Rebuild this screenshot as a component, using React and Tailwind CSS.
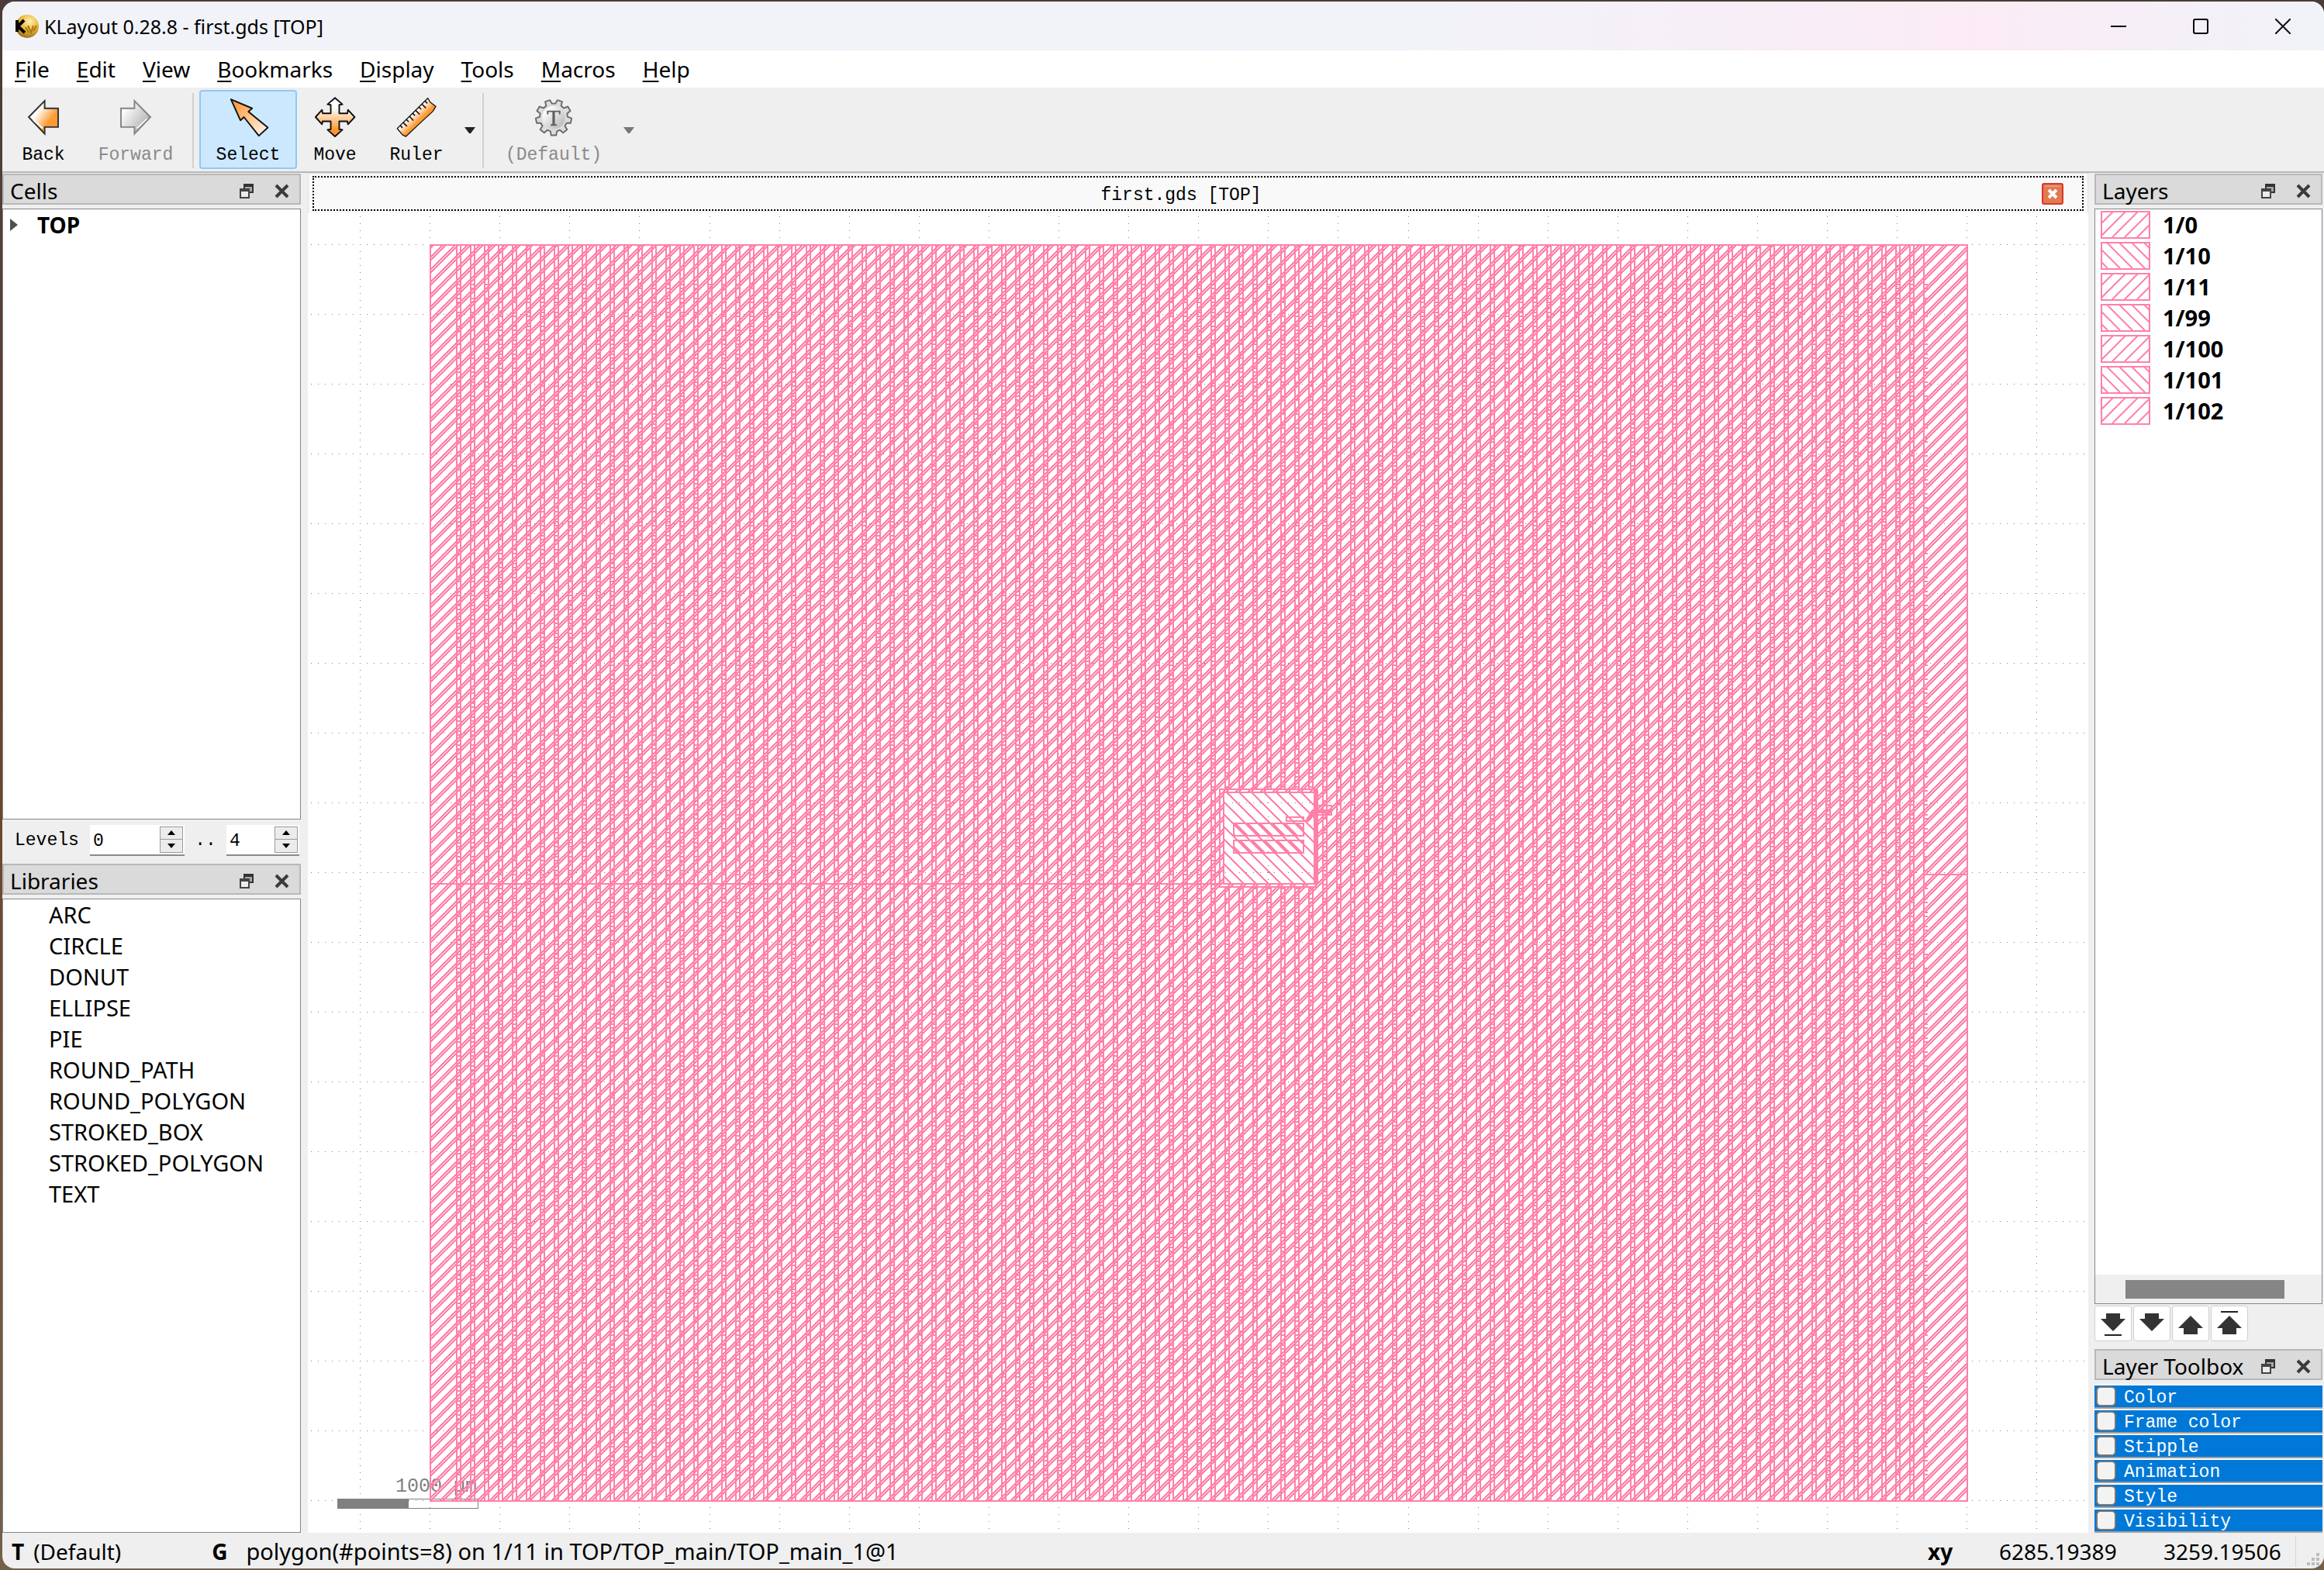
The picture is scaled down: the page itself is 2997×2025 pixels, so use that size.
import React from "react";

const PINK = "#ff80a8";

const menus = ["File", "Edit", "View", "Bookmarks", "Display", "Tools", "Macros", "Help"];
const libraries = [
  "ARC", "CIRCLE", "DONUT", "ELLIPSE", "PIE", "ROUND_PATH",
  "ROUND_POLYGON", "STROKED_BOX", "STROKED_POLYGON", "TEXT",
];
const layers = ["1/0", "1/10", "1/11", "1/99", "1/100", "1/101", "1/102"];
const toolboxRows = ["Color", "Frame color", "Stipple", "Animation", "Style", "Visibility"];

const range = (n) => Array.from({ length: n }, (_, i) => i);

/* ---------- icons ---------- */

function AppIcon() {
  return (
    <svg className="h-8 w-8" viewBox="0 0 32 32" aria-hidden="true">
      <defs>
        <radialGradient id="ball" cx="0.6" cy="0.3" r="0.8">
          <stop offset="0" stopColor="#fff3b8" />
          <stop offset="0.45" stopColor="#eebc3c" />
          <stop offset="1" stopColor="#8a5a0c" />
        </radialGradient>
      </defs>
      <circle cx="17" cy="16" r="15" fill="url(#ball)" />
      <path d="M4 8v15M13 8L5 16l9 8" stroke="#000" strokeWidth="4" fill="none" />
      <path d="M15 17l4 7M18 15l4 9 3-9M25 22l4-7" stroke="#a87416" strokeWidth="2" fill="none" />
    </svg>
  );
}

function BackIcon() {
  return (
    <svg className="h-14 w-14" viewBox="83 23 168 168" aria-hidden="true">
      <defs>
        <linearGradient id="back" x1="0.1" y1="0.2" x2="0.8" y2="0.8">
          <stop offset="0.25" stopColor="#fff" />
          <stop offset="0.8" stopColor="#ff9a33" />
        </linearGradient>
      </defs>
      <path d="M108 107L172 42V72H226V147H172V174Z" fill="url(#back)" stroke="#303030" strokeWidth="6" />
      <path d="M126 118L164 152" stroke="#fff" strokeWidth="6" />
    </svg>
  );
}

function ForwardIcon() {
  return (
    <svg className="h-14 w-14" viewBox="445 23 168 168" aria-hidden="true">
      <defs>
        <linearGradient id="fwd" x1="0" y1="0.2" x2="0.8" y2="0.8">
          <stop offset="0.1" stopColor="#fff" />
          <stop offset="0.9" stopColor="#bdbdbd" />
        </linearGradient>
      </defs>
      <path d="M588 107L524 42V72H470V147H524V174Z" fill="url(#fwd)" stroke="#848484" strokeWidth="6" />
      <path d="M574 114L534 152" stroke="#fff" strokeWidth="5" />
    </svg>
  );
}

function SelectIcon() {
  return (
    <svg className="h-14 w-14" viewBox="877 27 168 168" aria-hidden="true">
      <defs>
        <linearGradient id="sel" x1="0" y1="0" x2="1" y2="1">
          <stop offset="0.15" stopColor="#ff9f45" />
          <stop offset="0.95" stopColor="#fff6ec" />
        </linearGradient>
      </defs>
      <path
        d="M892 40L977 76L962 89L1040 153L1004 186L944 111L930 124Z"
        fill="url(#sel)" stroke="#111" strokeWidth="6" strokeLinejoin="round"
      />
    </svg>
  );
}

function MoveIcon() {
  return (
    <svg className="h-14 w-14" viewBox="12 23 168 168" aria-hidden="true">
      <defs>
        <linearGradient id="mov" x1="0" y1="0" x2="0" y2="1">
          <stop offset="0.25" stopColor="#fff" />
          <stop offset="0.85" stopColor="#ff942b" />
        </linearGradient>
      </defs>
      <path
        d="M96 30L126 56L113 58V92H146L148 78L175 107L148 136L146 124H113V156L126 158L96 185L66 158L79 156V124H46L44 136L18 107L44 78L46 92H79V58L66 56Z"
        fill="url(#mov)" stroke="#111" strokeWidth="6" strokeLinejoin="round"
      />
    </svg>
  );
}

function RulerIcon() {
  return (
    <svg className="h-14 w-14" viewBox="330 23 168 168" aria-hidden="true">
      <defs>
        <linearGradient id="rul" x1="0.35" y1="0.35" x2="0.65" y2="0.65">
          <stop offset="0.2" stopColor="#fff" />
          <stop offset="0.75" stopColor="#ff9a33" />
        </linearGradient>
      </defs>
      <path
        d="M337 153L460 31L468 46L492 64L480 84L430 130L372 185L358 178Z"
        fill="url(#rul)" stroke="#111" strokeWidth="4" strokeLinejoin="round"
      />
      <path
        d="M349 141L358 150M361 129L376 144M374 117L383 126M386 104L402 121M399 92L408 101M411 80L427 96M424 67L433 76M436 55L452 71M449 43L458 52"
        stroke="#111" strokeWidth="5"
      />
    </svg>
  );
}

const gearPath = (() => {
  const pts = [];
  const teeth = 9;
  range(teeth).forEach((i) => {
    const base = 90 + (i * 360) / teeth;
    [[-13, 56], [-8, 72], [8, 72], [13, 56]].forEach(([d, r]) => {
      const a = ((base + d) * Math.PI) / 180;
      pts.push(`${Math.round(948 + r * Math.cos(a))} ${Math.round(109 + r * Math.sin(a))}`);
    });
  });
  return `M${pts.join("L")}Z`;
})();

function DefaultIcon() {
  return (
    <svg className="h-14 w-14" viewBox="864 23 168 168" aria-hidden="true">
      <defs>
        <linearGradient id="gear" x1="0" y1="0" x2="1" y2="1">
          <stop offset="0.2" stopColor="#fafafa" />
          <stop offset="0.9" stopColor="#b9b9b9" />
        </linearGradient>
      </defs>
      <path d={gearPath} fill="#dcdcdc" stroke="#6a6a6a" strokeWidth="6" strokeLinejoin="round" />
      <circle cx="948" cy="109" r="46" fill="url(#gear)" />
      <path d="M924 96V84H972V96M936 139H960" fill="none" stroke="#606060" strokeWidth="6" />
      <path d="M948 84V138" stroke="#606060" strokeWidth="10" />
    </svg>
  );
}

function FloatIcon() {
  return (
    <svg className="h-5 w-5" viewBox="0 0 20 20" aria-hidden="true">
      <path d="M6 1H19V13H13V7H6Z" fill="#333" />
      <path d="M8 5H17V11H14V7H8Z" fill="#a8a8a8" />
      <path d="M1 7H14V20H1Z" fill="#444" />
      <path d="M3 11H12V18H3Z" fill="#ececec" />
    </svg>
  );
}

function CrossIcon() {
  return (
    <svg className="h-5 w-5" viewBox="0 0 20 20" aria-hidden="true">
      <path d="M2 3L17 18M17 3L2 18" stroke="#3a3a3a" strokeWidth="4" />
    </svg>
  );
}

function TabCloseIcon() {
  return (
    <svg className="h-7 w-7" viewBox="0 0 28 28" aria-hidden="true">
      <rect x="1" y="1" width="26" height="26" rx="2" fill="#e27a50" stroke="#d8392a" strokeWidth="2" />
      <path d="M4 4H24" stroke="#e8977c" strokeWidth="2" />
      <path d="M9 9L19 19M19 9L9 19" stroke="#fff" strokeWidth="4" />
    </svg>
  );
}

function Swatch({ back }) {
  const lines = back
    ? "M1 9L25 33M1 -7L41 33M17 -7L57 33M33 -7L64 24M49 -7L64 8M1 25L9 33"
    : "M-1 17L17 -1M-1 33L33 -1M15 33L49 -1M31 33L65 -1M47 33L65 15";
  return (
    <svg className="h-9 w-16" viewBox="0 0 64 36" aria-hidden="true">
      <g transform="translate(0,1)">
        <path d={lines} stroke={PINK} strokeWidth="2" />
      </g>
      <rect x="1" y="1" width="62" height="34" fill="none" stroke={PINK} strokeWidth="2" />
    </svg>
  );
}

const arrows = [
  { label: "Move to bottom", d: "M14 9H32V16H39L23 32L7 16H14Z", bar: 37 },
  { label: "Move down", d: "M14 9H32V16H39L23 32L7 16H14Z" },
  { label: "Move up", d: "M14 36H32V28H39L23 12L7 28H14Z" },
  { label: "Move to top", d: "M14 36H32V28H39L23 12L7 28H14Z", bar: 7 },
];

/* ---------- shared pieces ---------- */

function DockHeader({ title }) {
  return (
    <div className="flex h-10 shrink-0 items-center border-2 border-[#b8b8b8] bg-[#dadada] pl-2 pr-3 pt-[3px]">
      <h2 className="flex-1 whitespace-nowrap text-[28px]">{title}</h2>
      <div className="flex gap-6">
        <button aria-label={`Float ${title}`} className="flex h-6 w-6 items-center justify-center"><FloatIcon /></button>
        <button aria-label={`Close ${title}`} className="flex h-6 w-5 items-center justify-center"><CrossIcon /></button>
      </div>
    </div>
  );
}

function ToolButton({ icon, label, width, active, disabled }) {
  return (
    <button
      disabled={disabled}
      className={`${width} flex h-[102px] flex-col items-center rounded-sm border-2 pt-[6px] ${
        active ? "border-[#90c8f6] bg-[#cce8ff]" : "border-transparent"
      } ${disabled ? "text-[#8a8a8a]" : "text-black"}`}
    >
      {icon}
      <span className="mt-[6px] whitespace-nowrap font-['Liberation_Mono',monospace] text-[23px] leading-8">{label}</span>
    </button>
  );
}

function DropArrow({ color, label, width }) {
  return (
    <button aria-label={label} className={`${width} flex h-[102px] items-center justify-center pt-[2px]`}>
      <svg className="h-2 w-[14px]" viewBox="0 0 14 8" aria-hidden="true">
        <path d="M0 0H14L8 8H6Z" fill={color} />
      </svg>
    </button>
  );
}

function Spin({ value, label, width }) {
  return (
    <div className={`${width} flex h-10 border-b-2 border-[#8a8a8a] bg-white`}>
      <input
        aria-label={label}
        defaultValue={value}
        className="w-0 flex-1 bg-transparent pl-1 pt-1 font-['Liberation_Mono',monospace] text-[23px] outline-none"
      />
      <div className="mr-[2px] mt-[2px] flex h-[34px] w-[30px] flex-col border border-[#9a9a9a] bg-[#ececec]">
        <button aria-label={`${label} up`} className="flex flex-1 items-center justify-center border-b border-[#9a9a9a]">
          <svg className="h-[6px] w-[10px]" viewBox="0 0 10 6"><path d="M5 0L10 6H0Z" /></svg>
        </button>
        <button aria-label={`${label} down`} className="flex flex-1 items-center justify-center">
          <svg className="h-[6px] w-[10px]" viewBox="0 0 10 6"><path d="M5 6L10 0H0Z" /></svg>
        </button>
      </div>
    </div>
  );
}

/* ---------- layout drawing ---------- */

// One 16x16 stipple tile: a cell is set when (x + dir * y) mod 16 is in the list.
const stipple = (dir, list) => {
  let d = "";
  range(16).forEach((y) =>
    range(16).forEach((x) => {
      if (list.includes((x + dir * y + 16) % 16)) d += `M${x} ${y}h1v1h-1z`;
    })
  );
  return d;
};

const hatch = stipple(1, [5, 6, 7, 9, 10, 11]);
const backHatch = stipple(-1, [15, 0, 1]);
const denseHatch = stipple(-1, [15, 0, 1, 2, 3, 4]);

const gridDots = (() => {
  let d = "";
  range(26).forEach((i) => {
    const x = Math.round(464 + i * 90.1);
    range(189).forEach((k) => { d += `M${x} ${279 + 9 * k}h1v1h-1z`; });
  });
  range(19).forEach((i) => {
    const y = 315 + i * 90;
    range(255).forEach((k) => { d += `M${401 + 9 * k} ${y}h1v1h-1z`; });
  });
  return d;
})();

const columns = (() => {
  let d = "";
  range(106).forEach((i) => {
    const x = Math.round(588 + i * 18.02);
    d += `M${x} 315h2v1622h-2z`;
    if (i < 105) d += `M${x + 5} 315h2v1622h-2z`;
    range(86).forEach((k) => {
      const y = 366 + 18 * k;
      d += `M${x + 1} ${y}h5v2h-5zM${x + 1} ${y + 5}h5v2h-5z`;
    });
  });
  return d;
})();

function LayoutDrawing() {
  return (
    <svg className="block min-h-0 w-full flex-1 bg-white" shapeRendering="crispEdges" role="img" aria-label="Layout view">
      <defs>
        <pattern id="hatch" width="16" height="16" patternUnits="userSpaceOnUse">
          <path d={hatch} fill={PINK} />
        </pattern>
        <pattern id="backHatch" width="16" height="16" patternUnits="userSpaceOnUse">
          <path d={backHatch} fill={PINK} />
        </pattern>
        <pattern id="denseHatch" width="16" height="16" patternUnits="userSpaceOnUse">
          <path d={denseHatch} fill={PINK} />
        </pattern>
        <clipPath id="outside">
          <path clipRule="evenodd" d="M554 315H2538V1937H554ZM1572 1017V1145H1700V1017Z" />
        </clipPath>
      </defs>
      <g transform="translate(-397,-275)">
        <path d={gridDots} fill="#808080" />
        <rect x="435" y="1933" width="91" height="13" fill="#808080" />
        <path d="M526 1933h90v12h-90z" fill="none" stroke="#808080" strokeWidth="1" />
        <text x="510" y="1924" fontSize="25" fill="#808080" fontFamily="'Liberation Mono', monospace">1000 µm</text>

        <path fillRule="evenodd" fill="url(#hatch)" d="M554 315H2538V1937H554ZM1577 1021V1141H1696V1021Z" />
        <path d={columns} fill={PINK} clipPath="url(#outside)" />
        <path d="M554 1139H1572V1141H554ZM2484 1127H2538V1129H2484Z" fill={PINK} />
        <rect x="555" y="316" width="1982" height="1620" fill="none" stroke={PINK} strokeWidth="2" />

        <rect x="1578" y="1022" width="117" height="118" fill="url(#backHatch)" stroke={PINK} strokeWidth="2" />
        <path d="M1573 1018H1697V1144H1573Z" fill="none" stroke={PINK} strokeWidth="2" />
        <path d="M1699 1018V1140" stroke={PINK} strokeWidth="2" />
        <rect x="1591" y="1062" width="90" height="16" fill="url(#denseHatch)" stroke={PINK} strokeWidth="2" />
        <rect x="1591" y="1084" width="90" height="16" fill="url(#denseHatch)" stroke={PINK} strokeWidth="2" />
        <rect x="1659" y="1054" width="22" height="5" fill="none" stroke={PINK} strokeWidth="2" />
        <path d="M1682 1060L1692 1044H1717V1049H1697L1688 1060Z" fill={PINK} />
        <rect x="1697" y="1039" width="20" height="12" fill="none" stroke={PINK} strokeWidth="2" />
      </g>
    </svg>
  );
}

/* ---------- page ---------- */

export default function App() {
  return (
    <div className="h-screen bg-linear-to-b from-[#4a3c38] via-[#6b452c] to-[#75604a] pb-[2px] pl-[3px] pt-[2px] font-['Noto_Sans',sans-serif] text-[29px] leading-9 text-black">
      <div className="flex h-full flex-col overflow-hidden rounded-2xl bg-[#efefef]">
        <header className="flex h-[63px] shrink-0 items-center bg-linear-to-r from-[#f1f3f9] from-60% via-[#fbebf5] via-85% to-[#f0f3f8] pl-[15px]">
          <AppIcon />
          <h1 className="ml-[7px] flex-1 text-[25px]">KLayout 0.28.8 - first.gds [TOP]</h1>
          <button aria-label="Minimize" className="flex h-full w-[106px] items-center justify-center">
            <svg className="h-5 w-5" viewBox="0 0 20 20"><path d="M0 10H20" stroke="#000" strokeWidth="2" /></svg>
          </button>
          <button aria-label="Maximize" className="flex h-full w-[106px] items-center justify-center">
            <svg className="h-5 w-5" viewBox="0 0 20 20"><rect x="1" y="1" width="18" height="18" rx="2" fill="none" stroke="#000" strokeWidth="2" /></svg>
          </button>
          <button aria-label="Close" className="flex h-full w-[106px] items-center justify-center">
            <svg className="h-5 w-5" viewBox="0 0 20 20"><path d="M0 0L20 20M20 0L0 20" stroke="#111" strokeWidth="2" /></svg>
          </button>
        </header>

        <nav className="flex h-[49px] shrink-0 items-center gap-[35px] border-b border-[#ececec] bg-white pl-4 text-[28px]">
          {menus.map((m) => (
            <button key={m} className="h-full">
              <span className="underline decoration-2 underline-offset-4">{m[0]}</span>{m.slice(1)}
            </button>
          ))}
        </nav>

        <div className="flex h-[109px] shrink-0 border-b-2 border-[#b8b8b8] pt-[2px]">
          <ToolButton icon={<BackIcon />} label="Back" width="w-[106px]" />
          <ToolButton icon={<ForwardIcon />} label="Forward" width="w-[132px]" disabled />
          <div className="mx-[7px] my-1 w-[2px] bg-[#d0d0d0]" />
          <ToolButton icon={<SelectIcon />} label="Select" width="w-[126px]" active />
          <ToolButton icon={<MoveIcon />} label="Move" width="w-[98px]" />
          <ToolButton icon={<RulerIcon />} label="Ruler" width="w-[112px]" />
          <DropArrow color="#222" label="Ruler options" width="w-[26px]" />
          <div className="mx-[3px] my-1 w-[2px] bg-[#d0d0d0]" />
          <ToolButton icon={<DefaultIcon />} label="(Default)" width="w-[174px]" disabled />
          <DropArrow color="#777" label="Default options" width="w-[20px]" />
        </div>

        <main className="flex min-h-0 flex-1">
          <aside className="mr-[9px] flex w-[385px] shrink-0 flex-col pt-[1px]">
            <DockHeader title="Cells" />
            <div className="mt-[5px] h-[788px] border border-[#85858f] bg-white">
              <div className="flex h-10 items-center pl-2">
                <svg className="h-4 w-3" viewBox="0 0 12 16" aria-hidden="true"><path d="M1 0L11 8L1 16Z" fill="#505050" /></svg>
                <span className="ml-6 text-[28px] font-bold">TOP</span>
              </div>
            </div>
            <div className="flex h-[57px] items-center pb-2 pl-4 pt-1 font-['Liberation_Mono',monospace] text-[23px]">
              <span className="w-[97px]">Levels</span>
              <Spin value="0" label="Minimum level" width="w-[122px]" />
              <span className="w-[54px] text-center">..</span>
              <Spin value="4" label="Maximum level" width="w-[94px]" />
            </div>
            <DockHeader title="Libraries" />
            <ul className="mt-[5px] min-h-0 flex-1 border border-[#85858f] bg-white pl-[59px]">
              {libraries.map((l) => <li key={l} className="h-10 leading-10">{l}</li>)}
            </ul>
          </aside>

          <section className="flex min-w-0 flex-1 flex-col">
            <div className="flex h-[52px] shrink-0 flex-col border-x border-t border-[#e0e0e0] bg-[#f9f9f9] px-[5px] py-[3px]">
              <div className="flex h-full items-center border-2 border-dotted border-black pl-2">
                <span className="flex-1 pt-1 text-center font-['Liberation_Mono',monospace] text-[23px]">first.gds [TOP]</span>
                <button aria-label="Close tab" className="mr-6"><TabCloseIcon /></button>
              </div>
            </div>
            <LayoutDrawing />
          </section>

          <aside className="ml-2 mr-[2px] flex w-[294px] shrink-0 flex-col pt-[1px]">
            <DockHeader title="Layers" />
            <div className="mt-[5px] flex min-h-0 flex-1 flex-col border border-[#85858f] bg-white">
              <ul className="flex-1">
                {layers.map((l, i) => (
                  <li key={l} className="flex h-10 items-center pl-[7px]">
                    <Swatch back={i % 2 === 1} />
                    <span className="ml-4 font-bold">{l}</span>
                  </li>
                ))}
              </ul>
              <div className="flex h-[37px] items-center bg-[#efefef] pl-[39px] pr-12">
                <div className="h-6 w-full bg-[#858585]" />
              </div>
            </div>
            <div className="mb-[10px] mt-[2px] flex gap-[2px]">
              {arrows.map((a) => (
                <button key={a.label} aria-label={a.label} className="h-[46px] w-12 rounded border border-[#cfcfcf] bg-white">
                  <svg className="h-11 w-[46px]" viewBox="0 0 46 44" aria-hidden="true">
                    <path d={a.d} fill="#333" />
                    {a.bar && <path d={`M12 ${a.bar}H34`} stroke="#222" strokeWidth="2" />}
                  </svg>
                </button>
              ))}
            </div>
            <DockHeader title="Layer Toolbox" />
            <div className="mt-[5px] flex flex-col">
              {toolboxRows.map((r) => (
                <label key={r} className="flex h-8 items-center border-b-2 border-t-2 border-b-[#a0a0a0] border-t-white bg-[#0078d7] pl-[2px] font-['Liberation_Mono',monospace] text-[23px] text-white">
                  <input type="checkbox" className="mr-[10px] h-[26px] w-[26px] appearance-none rounded-md border-2 border-[#777] bg-[#f3f3f3]" />
                  <span className="pt-1">{r}</span>
                </label>
              ))}
            </div>
          </aside>
        </main>

        <footer className="flex h-[46px] shrink-0 items-center pl-3 pt-[2px] text-[28px]">
          <b>T</b>
          <span className="ml-3 w-[230px]">(Default)</span>
          <b>G</b>
          <span className="ml-6 flex-1 text-[29px]">polygon(#points=8) on 1/11 in TOP/TOP_main/TOP_main_1@1</span>
          <b className="w-[92px]">xy</b>
          <span className="w-[212px]">6285.19389</span>
          <span className="w-[170px]">3259.19506</span>
          <div className="h-10 w-px bg-[#d5d5d5]" />
          <svg className="ml-[14px] mr-1 h-5 w-[18px] self-end" viewBox="0 0 18 20" aria-hidden="true">
            <path d="M12 0h4v4h-4zM12 6h4v4h-4zM12 12h4v4h-4zM6 6h4v4h-4zM6 12h4v4h-4zM0 12h4v4h-4z" fill="#bdbdbd" />
          </svg>
        </footer>
      </div>
    </div>
  );
}
